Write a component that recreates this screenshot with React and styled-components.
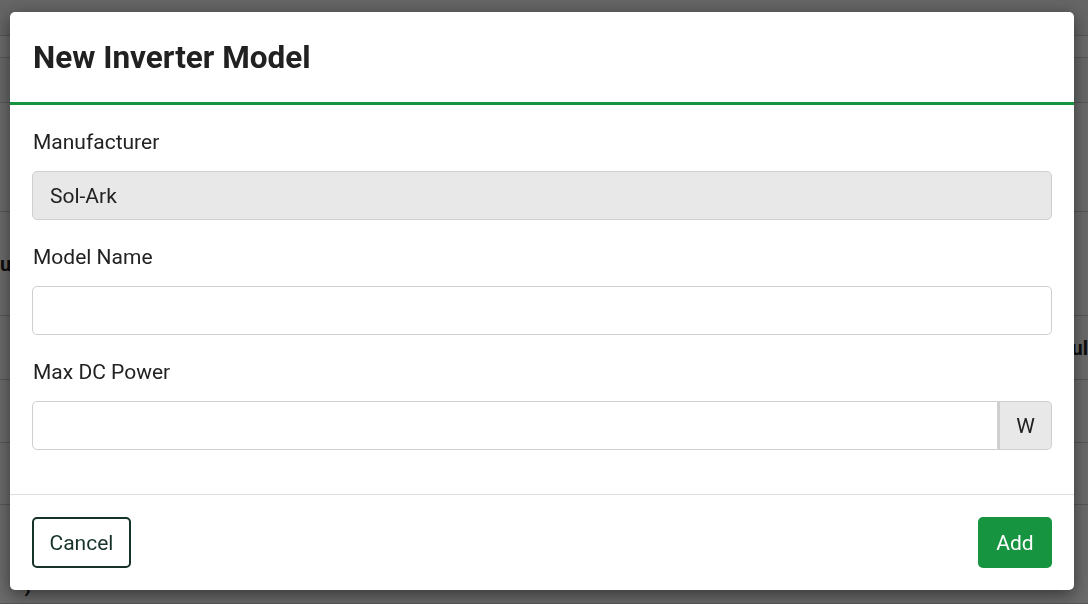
import styled, { createGlobalStyle } from 'styled-components';

const GlobalStyle = createGlobalStyle`
	html, body {
		margin: 0;
		padding: 0;
		height: 100%;
		overflow: hidden;
	}
	body {
		font-family: Roboto, 'Liberation Sans', sans-serif;
		background: #fff;
		color: #222;
	}
`;

const rows = [
	{ h: 36, bg: '#f0f0f0', left: '', right: '' },
	{ h: 22, bg: '#fff', left: '', right: '' },
	{ h: 45, bg: '#f7f7f7', left: '', right: '' },
	{ h: 109, bg: '#fff', left: '', right: '' },
	{ h: 104, bg: '#fff', left: 'u', right: '' },
	{ h: 64, bg: '#fff', left: '', right: 'ul' },
	{ h: 63, bg: '#fff', left: '', right: '' },
	{ h: 62, bg: '#fff', left: '', right: '' },
	{ h: 99, bg: '#fff', left: '', right: '' },
];

function Modal() {
	return (
		<Dialog>
			<Header>
				<Title>New Inverter Model</Title>
			</Header>
			<Body>
				<Group>
					<Label>Manufacturer</Label>
					<Input value="Sol-Ark" disabled readOnly />
				</Group>
				<Group>
					<Label>Model Name</Label>
					<Input defaultValue="" />
				</Group>
				<Group>
					<Label>Max DC Power</Label>
					<InputRow>
						<Input defaultValue="" $joined />
						<Addon>W</Addon>
					</InputRow>
				</Group>
			</Body>
			<Footer>
				<OutlineButton>Cancel</OutlineButton>
				<PrimaryButton>Add</PrimaryButton>
			</Footer>
		</Dialog>
	);
}

export default function App() {
	return (
		<>
			<GlobalStyle />
			<Page>
				{rows.map((r, i) => (
					<Row key={i} $h={r.h} $bg={r.bg}>
						<Cell>{r.left}</Cell>
						<Cell>{r.right}</Cell>
					</Row>
				))}
				<Chevron>›</Chevron>
			</Page>
			<Overlay>
				<Modal />
			</Overlay>
		</>
	);
}

const Page = styled.div`
	display: flex;
	flex-direction: column;
	height: 604px;
	position: relative;
`;

const Row = styled.div`
	display: flex;
	justify-content: space-between;
	align-items: center;
	height: ${({ $h }) => $h}px;
	background: ${({ $bg }) => $bg};
	border-bottom: 1px solid #cfcfcf;
	box-sizing: border-box;
	flex-shrink: 0;
`;

const Cell = styled.div`
	font-weight: 700;
	font-size: 20px;
	color: #222;
`;

const Chevron = styled.div`
	position: absolute;
	left: 24px;
	top: 578px;
	font-size: 22px;
	line-height: 24px;
	font-weight: 700;
	color: #222;
`;

const Overlay = styled.div`
	position: fixed;
	inset: 0;
	background: rgba(0, 0, 0, 0.58);
	padding: 12px 14px 0 10px;
`;

const Dialog = styled.div`
	background: #fff;
	border-radius: 5px;
	box-shadow: 0 5px 18px rgba(0, 0, 0, 0.5);
	display: flex;
	flex-direction: column;
	overflow: hidden;
`;

const Header = styled.div`
	height: 90px;
	display: flex;
	align-items: center;
	padding: 0 22px 0 23px;
	border-bottom: 3px solid #17943f;
`;

const Title = styled.h1`
	margin: 0;
	font-size: 31.5px;
	font-weight: 700;
	color: #212121;
`;

const Body = styled.div`
	padding: 22px 22px 44px;
	display: flex;
	flex-direction: column;
	gap: 22px;
	border-bottom: 1px solid #dedede;
`;

const Group = styled.div`
	display: flex;
	flex-direction: column;
`;

const Label = styled.label`
	font-size: 21px;
	line-height: 30px;
	margin-bottom: 14px;
	padding-left: 1px;
	color: #222;
`;

const InputRow = styled.div`
	display: flex;
`;

const Input = styled.input`
	box-sizing: border-box;
	height: 49px;
	width: 100%;
	min-width: 0;
	flex: none;
	font-family: inherit;
	font-size: 21px;
	color: #222;
	padding: 0 17px;
	border: 1.5px solid #cfcfcf;
	border-radius: ${({ $joined }) => ($joined ? '5px 0 0 5px' : '5px')};
	background: #fff;
	outline: none;

	${InputRow} & {
		flex: 1;
		width: auto;
	}

	&:disabled {
		background: #e8e8e8;
		color: #222;
		-webkit-text-fill-color: #222;
		opacity: 1;
	}
`;

const Addon = styled.div`
	box-sizing: border-box;
	width: 54px;
	height: 49px;
	display: flex;
	align-items: center;
	justify-content: center;
	font-size: 21px;
	color: #222;
	background: #e8e8e8;
	border: 1.5px solid #cfcfcf;
	border-left: 2px solid #cfcfcf;
	border-radius: 0 5px 5px 0;
`;

const Footer = styled.div`
	height: 95px;
	box-sizing: border-box;
	padding: 0 22px;
	display: flex;
	align-items: center;
	justify-content: space-between;
`;

const OutlineButton = styled.button`
	box-sizing: border-box;
	height: 51px;
	width: 99px;
	font-family: inherit;
	font-size: 21px;
	color: #163328;
	background: #fff;
	border: 2px solid #163328;
	border-radius: 5px;
	cursor: pointer;
`;

const PrimaryButton = styled.button`
	box-sizing: border-box;
	height: 51px;
	width: 74px;
	font-family: inherit;
	font-size: 21px;
	color: #fff;
	background: #17943f;
	border: none;
	border-radius: 5px;
	cursor: pointer;
`;
